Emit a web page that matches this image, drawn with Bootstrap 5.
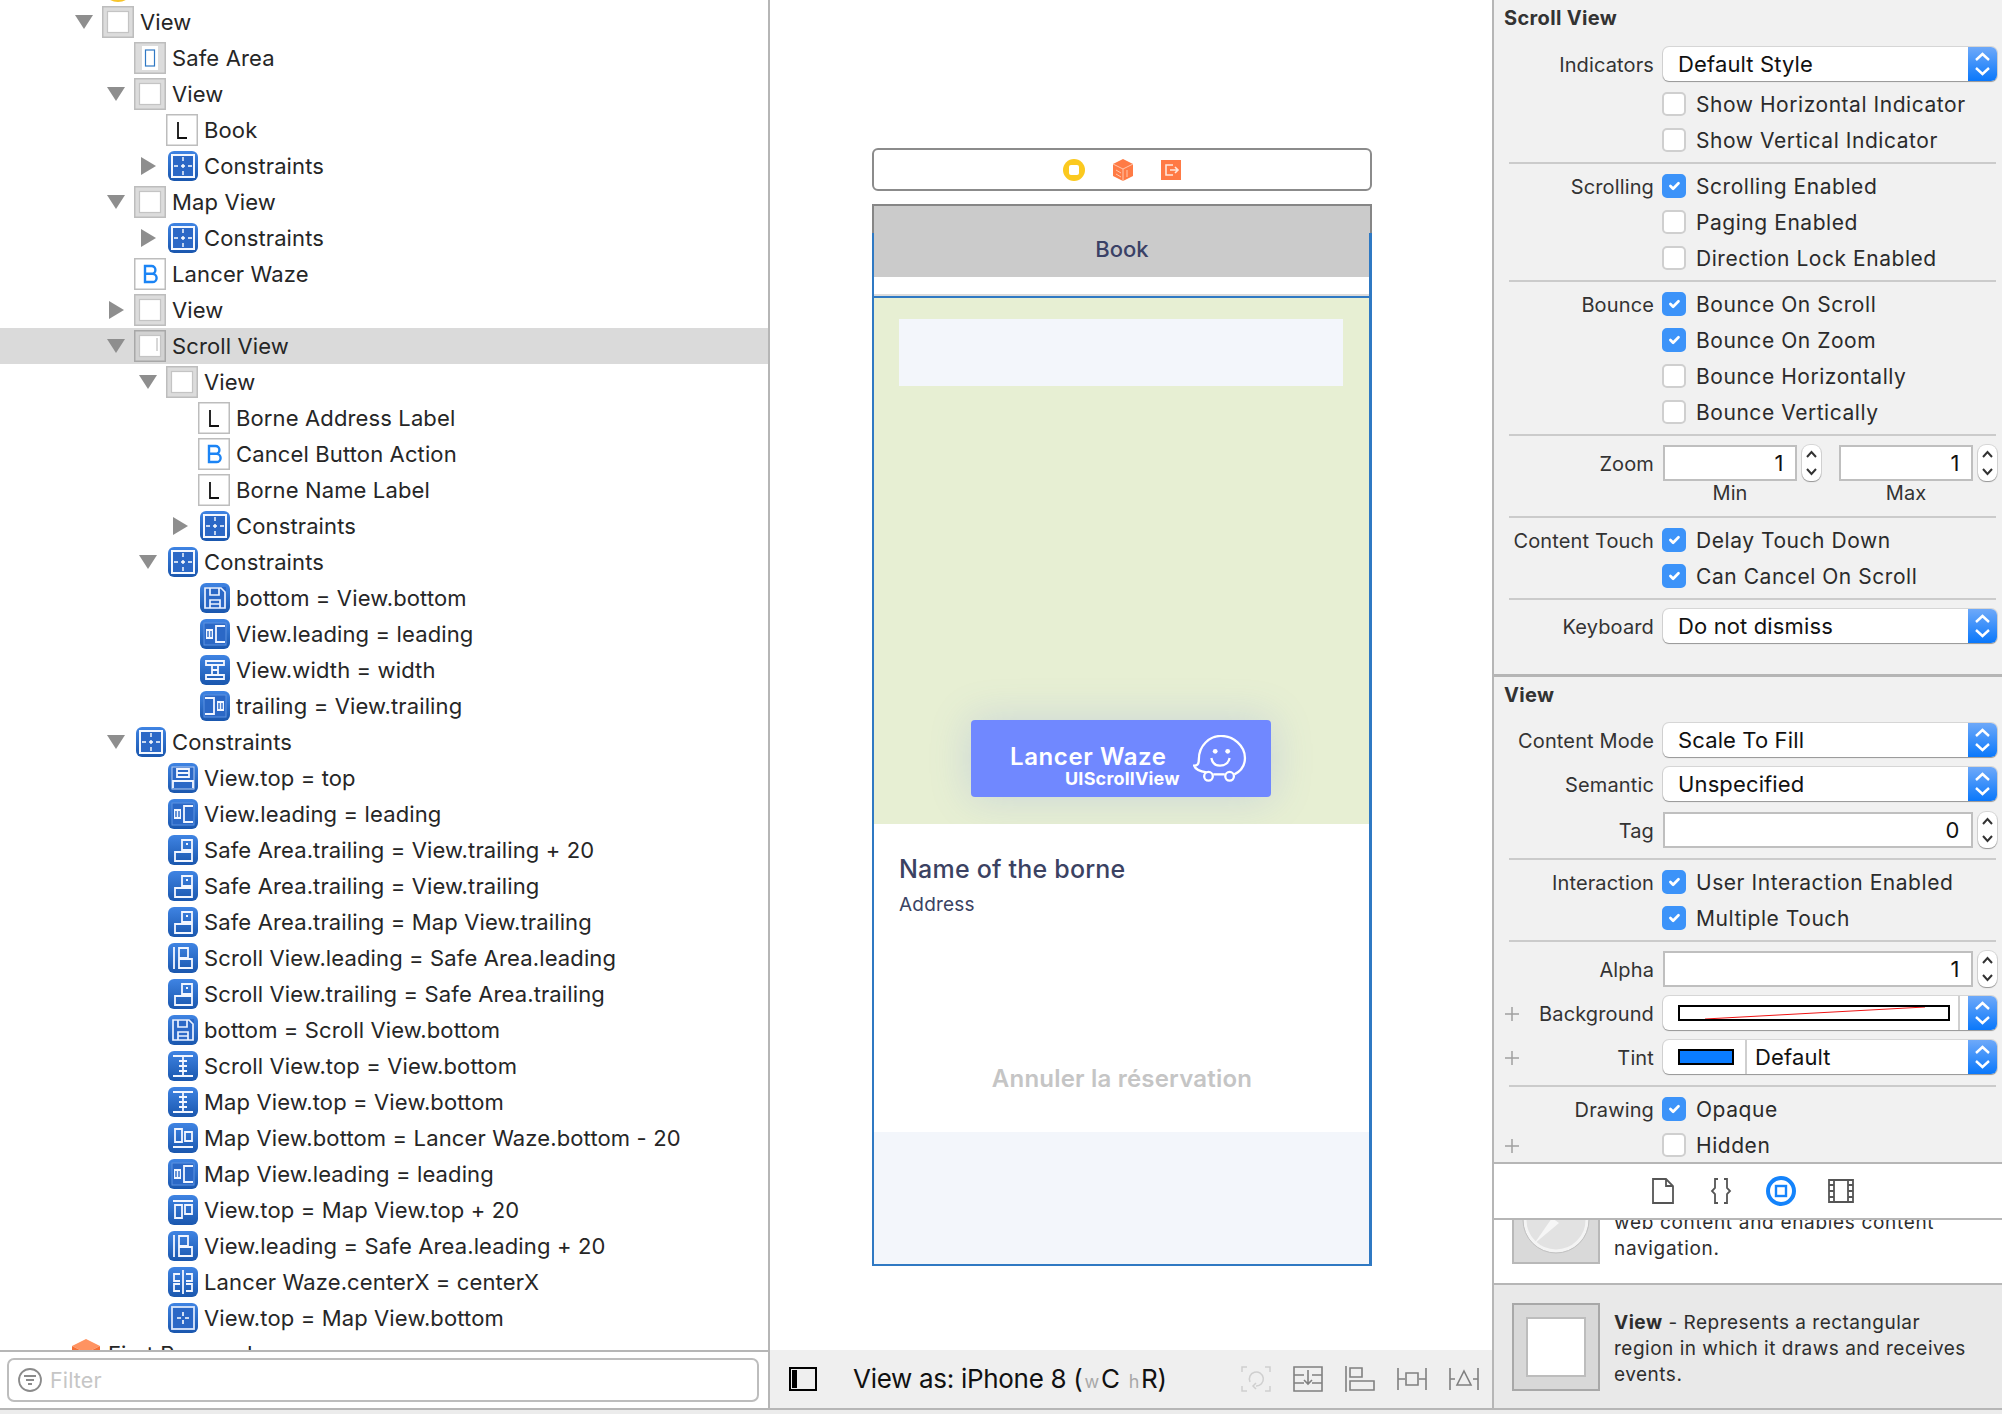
<!doctype html>
<html lang="en">
<head>
<meta charset="utf-8">
<title>Interface Builder</title>
<link rel="stylesheet" href="https://cdn.jsdelivr.net/npm/bootstrap@5.3.0/dist/css/bootstrap.min.css">
<style>
html,body{height:1414px;overflow:hidden}
body{width:2002px;background:#ececec;font-family:Inter,Roboto,"Liberation Sans",sans-serif;font-size:22px;color:#262626;letter-spacing:.13px}
svg{display:block;flex:none}
.shell{height:1408px}
/* outline */
.tree-col{width:770px;background:#fff;border-right:2px solid #b6b6b6}
.tree{height:1350px;overflow:hidden;padding-top:4px}
.trow{height:36px;line-height:36px;white-space:nowrap}
.trow.first{margin-top:-36px}
.trow.sel{background:#dadada}
.lv0{padding-left:75px}.lv1{padding-left:107px}.lv2{padding-left:139px}.lv3{padding-left:171px}
.lvc{padding-left:72px}
.tog{width:18px;margin-right:9px;height:18px}
.ico{margin-right:6px}
.cube{margin-right:8px}
.filter-bar{height:58px;border-top:2px solid #b6b6b6;padding:6px 9px 0 7px;background:#fff}
.filter-field{height:44px;border:2px solid #bdbdbd;border-radius:7px;padding-left:9px;gap:8px;color:#c6c6c6;font-size:21.500px}
/* canvas */
.canvas-col{width:724px;background:#fff;border-right:2px solid #b6b6b6}
.canvas{height:1350px;padding:148px 0 0 102px;overflow:hidden}
.scene-bar{width:500px;height:43px;border:2px solid #8b8b8b;border-radius:6px;gap:28px;padding-right:1px}
.phone{position:relative;width:500px;height:1062px;margin-top:13px;border:2px solid #868686;border-bottom-color:#2f79c3;background:#f3f6fb}
.phone-frame{position:absolute;left:-2px;right:-2px;top:27px;bottom:-2px;border:solid #2f79c3;border-width:0 3px 2px 2px;pointer-events:none}
.nav-area{height:71px;background:#cbcbcb;color:#3a4166;font-weight:500;font-size:22px;letter-spacing:0;padding-top:28px;line-height:30px}
.nav-gap{height:21px;background:#fff;border-bottom:2px solid #2f79c3;box-shadow:inset 0 -2px 0 #dcdcdc}
.map-area{height:526px;background:#e7efd3;padding:21px 27px 0 25px}
.addr-box{height:67px;background:#f3f6fb}
.waze-btn{width:300px;height:77px;margin-left:72px;margin-top:334px;background:#7088ff;border-radius:4px;box-shadow:0 0 42px rgba(90,120,230,.22);color:#fff;padding:0 24px 0 39px}
.waze-main{font-weight:600;font-size:24px;line-height:28px;letter-spacing:.6px;margin-top:23px;white-space:nowrap}
.waze-sub{font-weight:700;font-size:18px;line-height:18px;letter-spacing:.2px;margin-left:55px;margin-top:-1px;white-space:nowrap}
.info-area{height:308px;background:#fff;padding:0 25px;color:#3b4262;letter-spacing:.2px}
.borne-name{font-weight:500;font-size:25px;line-height:30px;padding-top:30px;height:60px}
.borne-addr{font-size:19px;line-height:24px;margin-top:9px;font-weight:400}
.cancel-txt{color:#c5c5c5;font-weight:600;font-size:24px;line-height:30px;text-align:center;margin-top:147px;letter-spacing:.2px}
.canvas-foot{height:58px;background:#efefef;padding-left:19px}
.viewas{margin-left:36px;font-size:26px;color:#111;letter-spacing:-.3px;width:388px;white-space:nowrap;margin-top:-1px}
.viewas small{font-size:18px;color:#a8a8a8;margin:0 2px}
.foot-ico{gap:22px}
/* inspector */
.insp-col{width:506px;background:#f1f1f1}
.insp{height:1162px;overflow:hidden;font-size:21px;color:#2b2b2b;letter-spacing:.55px}
.insp-h{height:36px;line-height:36px;padding-left:10px;font-weight:700;font-size:20px;color:#333;letter-spacing:.35px}
.r{height:36px;line-height:36px;white-space:nowrap}
.r>span{padding-top:2px}
.lab{width:160px;flex:none;text-align:right;font-size:20px;color:#333;margin-right:8px;letter-spacing:.13px;padding-top:2px}
.lab.plus{padding-left:11px;align-items:center}
.form-check-input.cb{width:24px;height:24px;margin:0 10px 0 0;border:2px solid #cfcfcf;border-radius:5px;flex:none;opacity:1!important;background-color:#fff}
.form-check-input.cb:checked{background-color:#3c93f9;border-color:#3c93f9;background-size:88%}
.sep{height:2px;margin:4px 6px 4px 15px;background:#cbcbcb}
.mt4{margin-top:4px}.mt8{margin-top:8px}.mt10{margin-top:10px}.mt9{margin-top:9px}.mt11{margin-top:11px}
.sel-pop{width:334px;height:34px;background:#fff;border-radius:6px;box-shadow:0 1px 1px rgba(0,0,0,.3),0 0 0 1px #d6d6d6;font-size:22px;color:#111;line-height:34px;overflow:hidden;margin-left:1px;letter-spacing:.13px}
.pop-txt{padding-left:15px;flex:1}
.pop-arrow{width:29px;height:34px;background:linear-gradient(#6ea9f9,#0a78fb);flex:none;justify-content:center}
.num{height:36px;border:2px solid #bfbfbf;background:#fff;text-align:right;line-height:32px;padding-right:11px;font-size:22px;color:#111;margin-left:1px}
.num.w134{width:134px}
.num.w310{width:310px}
.step{width:19px;height:36px;border-radius:8px;background:#fff;box-shadow:0 1px 1px rgba(0,0,0,.3),0 0 0 1px #d6d6d6;margin-left:5px;flex:none}
.mm{font-size:20px;color:#333;height:24px;line-height:24px;text-align:center;width:134px;letter-spacing:.1px}
.zoomgap{margin-right:17px}
.zoomcap{padding-left:169px;height:24px}
.capgap{margin-right:42px}
.sw-bg{width:272px;height:16px;border:2px solid #000;margin-left:15px;flex:none}
.v-div{width:2px;height:34px;background:#cfcfcf;flex:none}
.sw-tint{width:56px;height:16px;border:2px solid #000;background:#0a7cff;margin:0 11px 0 15px;flex:none}
.sect-line{height:3px;background:#b5b5b5;margin-top:30px}
.tabs{height:58px;background:#fff;border-top:2px solid #b6b6b6;border-bottom:2px solid #b6b6b6;gap:34px;padding-left:158px}
.tab-a{margin-right:2px}.tab-c{margin-right:-2px}
.lib{height:186px;background:#fff;font-size:19px;color:#2e2e2e;line-height:26px;letter-spacing:.5px}
.lib-a{height:63px;overflow:hidden;padding-left:18px;gap:14px;letter-spacing:.68px}
.lib-thumb{width:88px;height:88px;margin-top:-44px;flex:none}
.lib-text{margin-top:-10px;width:374px;white-space:nowrap}
.lib-b{height:125px;background:#e9e9e9;border-top:2px solid #b6b6b6;padding:18px 0 0 18px;gap:14px}
.view-thumb{width:88px;height:88px;background:#d8d8d8;border:2px solid #a8a8a8;padding:12px;flex:none}
.view-thumb span{display:block;width:100%;height:100%;background:#fff;border:2px solid #bdbdbd}
.lib-b .lib-copy{margin-top:7px;width:366px}
.botline{height:2px;background:#b6b6b6}
</style>
</head>
<body>
<svg width="0" height="0" style="position:absolute" aria-hidden="true">
<defs>
<linearGradient id="bg" x1="0" y1="0" x2="0" y2="1"><stop offset="0" stop-color="#3f84e3"/><stop offset="1" stop-color="#1a57ae"/></linearGradient>
<symbol id="dn" viewBox="0 0 18 18"><path d="M0 2h18L9 16z" fill="#8e8e8e"/></symbol>
<symbol id="rt" viewBox="0 0 18 18"><path d="M2 0l15 9-15 9z" fill="#8e8e8e"/></symbol>
<symbol id="vw" viewBox="0 0 32 32"><rect x=".75" y=".75" width="30.5" height="30.5" fill="#dcdcdc" stroke="#bdbdbd" stroke-width="1.5"/><rect x="5.5" y="5.5" width="21" height="21" fill="#fff" stroke="#c4c4c4" stroke-width="1.2"/></symbol>
<symbol id="vs" viewBox="0 0 32 32"><rect x=".75" y=".75" width="30.5" height="30.5" fill="#d2d2d2" stroke="#a8a8a8" stroke-width="1.5"/><rect x="5.5" y="5.5" width="21" height="21" fill="#fff" stroke="#c4c4c4" stroke-width="1.2"/><path d="M23 8v13" stroke="#b0b0b0" stroke-width="1"/></symbol>
<symbol id="sa" viewBox="0 0 32 32"><rect x=".75" y=".75" width="30.5" height="30.5" fill="#dcdcdc" stroke="#bdbdbd" stroke-width="1.5"/><rect x="8" y="4" width="16" height="24" fill="#fff"/><rect x="11.5" y="8" width="9" height="16" fill="#fff" stroke="#2f78c4" stroke-width="1.2"/></symbol>
<symbol id="lb" viewBox="0 0 32 32"><rect x=".75" y=".75" width="30.5" height="30.5" fill="#fff" stroke="#bdbdbd" stroke-width="1.5"/><path d="M12 8v16h9" fill="none" stroke="#111" stroke-width="1.8"/></symbol>
<symbol id="bt" viewBox="0 0 32 32"><rect x=".75" y=".75" width="30.5" height="30.5" fill="#fff" stroke="#bdbdbd" stroke-width="1.5"/><path d="M11 8h6.5a3.8 3.8 0 0 1 0 7.8H11zM11 15.8h7.5a4 4 0 0 1 0 8.2H11z" fill="none" stroke="#1b84f5" stroke-width="2.400"/></symbol>
<symbol id="cb0" viewBox="0 0 30 30"><rect width="30" height="30" rx="6" fill="url(#bg)"/></symbol>
<symbol id="grid" viewBox="0 0 30 30"><use href="#cb0"/><rect x="4" y="4" width="22" height="22" fill="#2b68c6" stroke="#f4f8ff" stroke-width="2"/><path d="M15 6v4M15 13v4M15 20v4M6 15h4M13 15h4M20 15h4" stroke="#fff" stroke-width="1.4"/></symbol>
<symbol id="frame" viewBox="0 0 30 30"><use href="#cb0"/><rect x="4" y="4" width="22" height="22" fill="#2b68c6" stroke="#dbe7fb" stroke-width="1.8"/><path d="M15 9v4M15 17v4M9 15h4M17 15h4" stroke="#fff" stroke-width="1.6"/></symbol>
<symbol id="flop" viewBox="0 0 30 30"><use href="#cb0"/><rect x="4" y="4" width="22" height="22" fill="#2b68c6"/><g fill="none" stroke="#eaf1ff" stroke-width="1.7"><path d="M5 5h16l4 4v16H5z"/><path d="M10 5v7h9V5M10 25v-8h10v8M10 21h10"/></g></symbol>
<symbol id="lead" viewBox="0 0 30 30"><use href="#cb0"/><rect x="4" y="4" width="22" height="22" fill="#2b68c6" stroke="#5d92e2" stroke-width="1"/><path d="M6 10h7v10H6z" fill="#f2f6ff"/><path d="M8 12v6M11 12v6" stroke="#2b68c6" stroke-width="1.400"/><path d="M25 7h-9v16h9" fill="none" stroke="#f2f6ff" stroke-width="1.800"/></symbol>
<symbol id="trail" viewBox="0 0 30 30"><use href="#cb0"/><rect x="4" y="4" width="22" height="22" fill="#2b68c6" stroke="#5d92e2" stroke-width="1"/><path d="M17 10h7v10h-7z" fill="#f2f6ff"/><path d="M19 12v6M22 12v6" stroke="#2b68c6" stroke-width="1.400"/><path d="M5 7h9v16H5" fill="none" stroke="#f2f6ff" stroke-width="1.800"/></symbol>
<symbol id="width" viewBox="0 0 30 30"><use href="#cb0"/><g fill="none" stroke="#f2f6ff" stroke-width="1.8"><path d="M6 6h18v4H6zM6 20h18v4H6zM12 10v10M18 10v10M12 15h6"/></g></symbol>
<symbol id="top" viewBox="0 0 30 30"><use href="#cb0"/><rect x="4" y="4" width="22" height="22" fill="#2b68c6" stroke="#b7cef3" stroke-width="1"/><g fill="none" stroke="#f2f6ff" stroke-width="1.8"><path d="M9 6h12v8H9zM5 25v-7h20v7M9 10h12"/></g></symbol>
<symbol id="tr2" viewBox="0 0 30 30"><use href="#cb0"/><g fill="none" stroke="#f2f6ff" stroke-width="1.8"><path d="M14 5h10v10H14zM7 17h17v9H7zM18 9h2"/></g></symbol>
<symbol id="ld2" viewBox="0 0 30 30"><use href="#cb0"/><g fill="none" stroke="#f2f6ff" stroke-width="1.8"><path d="M6 4v22M11 5h9v10h-9zM11 16h13v9H11z"/></g></symbol>
<symbol id="mid" viewBox="0 0 30 30"><use href="#cb0"/><g fill="none" stroke="#f2f6ff" stroke-width="1.8"><path d="M5 5h20M5 25h20M11 10h8M11 15h8M11 20h8M15 6v18"/></g></symbol>
<symbol id="bl" viewBox="0 0 30 30"><use href="#cb0"/><g fill="none" stroke="#f2f6ff" stroke-width="1.8"><path d="M5 24h20M7 6h7v13H7zM17 9h7v9h-7z"/></g></symbol>
<symbol id="tl" viewBox="0 0 30 30"><use href="#cb0"/><g fill="none" stroke="#f2f6ff" stroke-width="1.8"><path d="M5 6h20M7 10h7v13H7zM17 10h7v9h-7z"/></g></symbol>
<symbol id="cx" viewBox="0 0 30 30"><use href="#cb0"/><g fill="none" stroke="#f2f6ff" stroke-width="1.8"><path d="M15 3v24M12 7H6v7h6M18 7h6v7h-6M12 17H6v7h6M18 17h6v7h-6"/></g></symbol>
<symbol id="upd" viewBox="0 0 18 36"><path d="M4.5 12L9 7l4.5 5M4.5 24L9 29l4.5-5" fill="none" stroke="#333" stroke-width="2" /></symbol>
<symbol id="arr" viewBox="0 0 29 34"><path d="M8 13l6.5-6 6.500 6M8 21l6.500 6 6.500-6" fill="none" stroke="#fff" stroke-width="2.400"/></symbol>
<symbol id="pl" viewBox="0 0 14 14"><path d="M7 0v14M0 7h14" stroke="#a0a0a0" stroke-width="1.500"/></symbol>
</defs>
</svg>

<div class="shell d-flex">
  <!-- Outline -->
  <div class="tree-col flex-none">
    <div class="tree">
      <div class="trow first d-flex align-items-center lv0"><span class="tog"></span><svg class="ico" width="32" height="32" viewBox="0 0 32 32"><circle cx="16" cy="16" r="16" fill="#f7c52b"/></svg></div>
      <div class="trow d-flex align-items-center lv0"><svg class="tog"><use href="#dn"/></svg><svg class="ico" width="32" height="32"><use href="#vw"/></svg>View</div>
      <div class="trow d-flex align-items-center lv1"><span class="tog"></span><svg class="ico" width="32" height="32"><use href="#sa"/></svg>Safe Area</div>
      <div class="trow d-flex align-items-center lv1"><svg class="tog"><use href="#dn"/></svg><svg class="ico" width="32" height="32"><use href="#vw"/></svg>View</div>
      <div class="trow d-flex align-items-center lv2"><span class="tog"></span><svg class="ico" width="32" height="32"><use href="#lb"/></svg>Book</div>
      <div class="trow d-flex align-items-center lv2"><svg class="tog"><use href="#rt"/></svg><svg class="ico cico" width="32" height="30"><use href="#grid" x="2" width="30" height="30"/></svg>Constraints</div>
      <div class="trow d-flex align-items-center lv1"><svg class="tog"><use href="#dn"/></svg><svg class="ico" width="32" height="32"><use href="#vw"/></svg>Map View</div>
      <div class="trow d-flex align-items-center lv2"><svg class="tog"><use href="#rt"/></svg><svg class="ico" width="32" height="30"><use href="#grid" x="2" width="30" height="30"/></svg>Constraints</div>
      <div class="trow d-flex align-items-center lv1"><span class="tog"></span><svg class="ico" width="32" height="32"><use href="#bt"/></svg>Lancer Waze</div>
      <div class="trow d-flex align-items-center lv1"><svg class="tog"><use href="#rt"/></svg><svg class="ico" width="32" height="32"><use href="#vw"/></svg>View</div>
      <div class="trow sel d-flex align-items-center lv1"><svg class="tog"><use href="#dn"/></svg><svg class="ico" width="32" height="32"><use href="#vs"/></svg>Scroll View</div>
      <div class="trow d-flex align-items-center lv2"><svg class="tog"><use href="#dn"/></svg><svg class="ico" width="32" height="32"><use href="#vw"/></svg>View</div>
      <div class="trow d-flex align-items-center lv3"><span class="tog"></span><svg class="ico" width="32" height="32"><use href="#lb"/></svg>Borne Address Label</div>
      <div class="trow d-flex align-items-center lv3"><span class="tog"></span><svg class="ico" width="32" height="32"><use href="#bt"/></svg>Cancel Button Action</div>
      <div class="trow d-flex align-items-center lv3"><span class="tog"></span><svg class="ico" width="32" height="32"><use href="#lb"/></svg>Borne Name Label</div>
      <div class="trow d-flex align-items-center lv3"><svg class="tog"><use href="#rt"/></svg><svg class="ico" width="32" height="30"><use href="#grid" x="2" width="30" height="30"/></svg>Constraints</div>
      <div class="trow d-flex align-items-center lv2"><svg class="tog"><use href="#dn"/></svg><svg class="ico" width="32" height="30"><use href="#grid" x="2" width="30" height="30"/></svg>Constraints</div>
      <div class="trow d-flex align-items-center lv3"><span class="tog"></span><svg class="ico" width="32" height="30"><use href="#flop" x="2" width="30" height="30"/></svg>bottom = View.bottom</div>
      <div class="trow d-flex align-items-center lv3"><span class="tog"></span><svg class="ico" width="32" height="30"><use href="#lead" x="2" width="30" height="30"/></svg>View.leading = leading</div>
      <div class="trow d-flex align-items-center lv3"><span class="tog"></span><svg class="ico" width="32" height="30"><use href="#width" x="2" width="30" height="30"/></svg>View.width = width</div>
      <div class="trow d-flex align-items-center lv3"><span class="tog"></span><svg class="ico" width="32" height="30"><use href="#trail" x="2" width="30" height="30"/></svg>trailing = View.trailing</div>
      <div class="trow d-flex align-items-center lv1"><svg class="tog"><use href="#dn"/></svg><svg class="ico" width="32" height="30"><use href="#grid" x="2" width="30" height="30"/></svg>Constraints</div>
      <div class="trow d-flex align-items-center lv2"><span class="tog"></span><svg class="ico" width="32" height="30"><use href="#top" x="2" width="30" height="30"/></svg>View.top = top</div>
      <div class="trow d-flex align-items-center lv2"><span class="tog"></span><svg class="ico" width="32" height="30"><use href="#lead" x="2" width="30" height="30"/></svg>View.leading = leading</div>
      <div class="trow d-flex align-items-center lv2"><span class="tog"></span><svg class="ico" width="32" height="30"><use href="#tr2" x="2" width="30" height="30"/></svg>Safe Area.trailing = View.trailing + 20</div>
      <div class="trow d-flex align-items-center lv2"><span class="tog"></span><svg class="ico" width="32" height="30"><use href="#tr2" x="2" width="30" height="30"/></svg>Safe Area.trailing = View.trailing</div>
      <div class="trow d-flex align-items-center lv2"><span class="tog"></span><svg class="ico" width="32" height="30"><use href="#tr2" x="2" width="30" height="30"/></svg>Safe Area.trailing = Map View.trailing</div>
      <div class="trow d-flex align-items-center lv2"><span class="tog"></span><svg class="ico" width="32" height="30"><use href="#ld2" x="2" width="30" height="30"/></svg>Scroll View.leading = Safe Area.leading</div>
      <div class="trow d-flex align-items-center lv2"><span class="tog"></span><svg class="ico" width="32" height="30"><use href="#tr2" x="2" width="30" height="30"/></svg>Scroll View.trailing = Safe Area.trailing</div>
      <div class="trow d-flex align-items-center lv2"><span class="tog"></span><svg class="ico" width="32" height="30"><use href="#flop" x="2" width="30" height="30"/></svg>bottom = Scroll View.bottom</div>
      <div class="trow d-flex align-items-center lv2"><span class="tog"></span><svg class="ico" width="32" height="30"><use href="#mid" x="2" width="30" height="30"/></svg>Scroll View.top = View.bottom</div>
      <div class="trow d-flex align-items-center lv2"><span class="tog"></span><svg class="ico" width="32" height="30"><use href="#mid" x="2" width="30" height="30"/></svg>Map View.top = View.bottom</div>
      <div class="trow d-flex align-items-center lv2"><span class="tog"></span><svg class="ico" width="32" height="30"><use href="#bl" x="2" width="30" height="30"/></svg>Map View.bottom = Lancer Waze.bottom - 20</div>
      <div class="trow d-flex align-items-center lv2"><span class="tog"></span><svg class="ico" width="32" height="30"><use href="#lead" x="2" width="30" height="30"/></svg>Map View.leading = leading</div>
      <div class="trow d-flex align-items-center lv2"><span class="tog"></span><svg class="ico" width="32" height="30"><use href="#tl" x="2" width="30" height="30"/></svg>View.top = Map View.top + 20</div>
      <div class="trow d-flex align-items-center lv2"><span class="tog"></span><svg class="ico" width="32" height="30"><use href="#ld2" x="2" width="30" height="30"/></svg>View.leading = Safe Area.leading + 20</div>
      <div class="trow d-flex align-items-center lv2"><span class="tog"></span><svg class="ico" width="32" height="30"><use href="#cx" x="2" width="30" height="30"/></svg>Lancer Waze.centerX = centerX</div>
      <div class="trow d-flex align-items-center lv2"><span class="tog"></span><svg class="ico" width="32" height="30"><use href="#frame" x="2" width="30" height="30"/></svg>View.top = Map View.bottom</div>
      <div class="trow d-flex align-items-center lvc"><svg class="cube" width="28" height="30" viewBox="0 0 28 30"><path d="M0 7L14 0l14 7-14 7z" fill="#ff9361"/><path d="M0 7l14 7v16L0 23zM28 7v16l-14 7V14z" fill="#f56f35"/></svg>First Responder</div>
    </div>
    <div class="filter-bar">
      <div class="filter-field d-flex align-items-center">
        <svg width="24" height="26" viewBox="0 0 24 26"><circle cx="12" cy="13" r="11" fill="none" stroke="#8b8b8b" stroke-width="1.800"/><path d="M6 9h12M8 13h8M10 17h4" stroke="#8b8b8b" stroke-width="1.800"/></svg>
        <span>Filter</span>
      </div>
    </div>
  </div>

  <!-- Canvas -->
  <div class="canvas-col flex-none">
    <div class="canvas">
      <div class="scene-bar d-flex align-items-center justify-content-center">
        <svg width="22" height="22" viewBox="0 0 22 22"><circle cx="11" cy="11" r="11" fill="#fbc91f"/><rect x="6" y="6" width="10" height="10" rx="2" fill="#fff"/></svg>
        <svg width="20" height="22" viewBox="0 0 20 22"><path d="M0 5l10-5 10 5v12l-10 5-10-5z" fill="#ff7b45"/><path d="M0 5l10 5 10-5M10 10v12M3 11l5 3M3 15l5 3M14 11v7" stroke="#ffc7ac" stroke-width="1" fill="none"/></svg>
        <svg width="20" height="20" viewBox="0 0 20 20"><rect width="20" height="20" fill="#ff7a45"/><path d="M12 5H5v10h7M9 10h8M14 7l3 3-3 3" fill="none" stroke="#ffe6da" stroke-width="1.600"/></svg>
      </div>
      <div class="phone">
        <div class="nav-area text-center">Book</div>
        <div class="nav-gap"></div>
        <div class="map-area">
          <div class="addr-box"></div>
          <div class="waze-btn d-flex justify-content-between">
            <div>
              <div class="waze-main">Lancer Waze</div>
              <div class="waze-sub">UIScrollView</div>
            </div>
            <svg class="align-self-center" width="54" height="48" viewBox="0 0 56 50"><g fill="none" stroke="#fff" stroke-width="2.400"><path d="M14 39C6 38 2 35 1 32c3 0 5-1 5-7 0-14 11-24 23-24 13 0 25 10 25 23 0 9-5 14-11 17"/><path d="M21 41h12"/><circle cx="16" cy="43" r="4.500"/><circle cx="38" cy="43" r="4.500"/><path d="M19 24c1 5 4 8 9 8s9-3 10-8"/></g><circle cx="23" cy="17" r="2.500" fill="#fff"/><circle cx="36" cy="17" r="2.500" fill="#fff"/></svg>
          </div>
        </div>
        <div class="info-area">
          <div class="borne-name">Name of the borne</div>
          <div class="borne-addr">Address</div>
          <div class="cancel-txt">Annuler la réservation</div>
        </div>
        <div class="phone-frame"></div>
      </div>
    </div>
    <div class="canvas-foot d-flex align-items-center">
      <svg width="28" height="24" viewBox="0 0 28 24"><rect x="1" y="1" width="26" height="22" fill="none" stroke="#000" stroke-width="2"/><rect x="3" y="3" width="5" height="18" fill="#000"/></svg>
      <div class="viewas">View as: iPhone 8 (<small>w</small>C <small>h</small>R)</div>
      <div class="foot-ico d-flex">
        <svg width="30" height="26" viewBox="0 0 30 26"><g fill="none" stroke="#cfcfcf" stroke-width="1.500"><path d="M1 6V1h5M24 1h5v5M29 20v5h-5M6 25H1v-5"/><path d="M9 16a7 7 0 1 1 6 4M15 17l-3 3 3 3"/></g></svg>
        <svg width="30" height="26" viewBox="0 0 30 26"><g fill="none" stroke="#808080" stroke-width="1.600"><path d="M1 1h28v24H1zM1 9h10M19 9h10M1 17h10M19 17h10M15 4v14M11 14l4 4 4-4"/></g></svg>
        <svg width="30" height="26" viewBox="0 0 30 26"><g fill="none" stroke="#808080" stroke-width="1.600"><path d="M1 0v26M5 2h12v9H5zM5 15h24v9H5z"/></g></svg>
        <svg width="30" height="26" viewBox="0 0 30 26"><g fill="none" stroke="#808080" stroke-width="1.600"><path d="M1 2v22M29 2v22M1 13h7M22 13h7M9 7h12v12H9z"/></g></svg>
        <svg width="30" height="26" viewBox="0 0 30 26"><g fill="none" stroke="#808080" stroke-width="1.600"><path d="M1 2v22M29 2v22M1 13h5M24 13h5M15 5l7 14H8z"/></g></svg>
      </div>
    </div>
  </div>

  <!-- Inspector -->
  <div class="insp-col flex-grow-1">
    <div class="insp">
      <div class="insp-h">Scroll View</div>
      <div class="r d-flex align-items-center mt10"><div class="lab">Indicators</div><div class="sel-pop d-flex"><div class="pop-txt">Default Style</div><div class="pop-arrow d-flex"><svg width="29" height="34"><use href="#arr"/></svg></div></div></div>
      <div class="r d-flex align-items-center mt4"><div class="lab"></div><input class="form-check-input cb" type="checkbox" disabled><span>Show Horizontal Indicator</span></div>
      <div class="r d-flex align-items-center"><div class="lab"></div><input class="form-check-input cb" type="checkbox" disabled><span>Show Vertical Indicator</span></div>
      <div class="sep"></div>
      <div class="r d-flex align-items-center"><div class="lab">Scrolling</div><input class="form-check-input cb" type="checkbox" checked disabled><span>Scrolling Enabled</span></div>
      <div class="r d-flex align-items-center"><div class="lab"></div><input class="form-check-input cb" type="checkbox" disabled><span>Paging Enabled</span></div>
      <div class="r d-flex align-items-center"><div class="lab"></div><input class="form-check-input cb" type="checkbox" disabled><span>Direction Lock Enabled</span></div>
      <div class="sep"></div>
      <div class="r d-flex align-items-center"><div class="lab">Bounce</div><input class="form-check-input cb" type="checkbox" checked disabled><span>Bounce On Scroll</span></div>
      <div class="r d-flex align-items-center"><div class="lab"></div><input class="form-check-input cb" type="checkbox" checked disabled><span>Bounce On Zoom</span></div>
      <div class="r d-flex align-items-center"><div class="lab"></div><input class="form-check-input cb" type="checkbox" disabled><span>Bounce Horizontally</span></div>
      <div class="r d-flex align-items-center"><div class="lab"></div><input class="form-check-input cb" type="checkbox" disabled><span>Bounce Vertically</span></div>
      <div class="sep"></div>
      <div class="r d-flex align-items-center mt9"><div class="lab">Zoom</div><div class="num w134">1</div><div class="step zoomgap"><svg width="19" height="36" viewBox="0 0 18 36"><use href="#upd"/></svg></div><div class="num w134">1</div><div class="step"><svg width="19" height="36" viewBox="0 0 18 36"><use href="#upd"/></svg></div></div>
      <div class="zoomcap d-flex"><div class="mm capgap">Min</div><div class="mm">Max</div></div>
      <div class="sep mt11"></div>
      <div class="r d-flex align-items-center"><div class="lab">Content Touch</div><input class="form-check-input cb" type="checkbox" checked disabled><span>Delay Touch Down</span></div>
      <div class="r d-flex align-items-center"><div class="lab"></div><input class="form-check-input cb" type="checkbox" checked disabled><span>Can Cancel On Scroll</span></div>
      <div class="sep"></div>
      <div class="r d-flex align-items-center mt8"><div class="lab">Keyboard</div><div class="sel-pop d-flex"><div class="pop-txt">Do not dismiss</div><div class="pop-arrow d-flex"><svg width="29" height="34"><use href="#arr"/></svg></div></div></div>
      <div class="sect-line"></div>
      <div class="insp-h">View</div>
      <div class="r d-flex align-items-center mt9"><div class="lab">Content Mode</div><div class="sel-pop d-flex"><div class="pop-txt">Scale To Fill</div><div class="pop-arrow d-flex"><svg width="29" height="34"><use href="#arr"/></svg></div></div></div>
      <div class="r d-flex align-items-center mt8"><div class="lab">Semantic</div><div class="sel-pop d-flex"><div class="pop-txt">Unspecified</div><div class="pop-arrow d-flex"><svg width="29" height="34"><use href="#arr"/></svg></div></div></div>
      <div class="r d-flex align-items-center mt10"><div class="lab">Tag</div><div class="num w310">0</div><div class="step"><svg width="19" height="36" viewBox="0 0 18 36"><use href="#upd"/></svg></div></div>
      <div class="sep mt10"></div>
      <div class="r d-flex align-items-center"><div class="lab">Interaction</div><input class="form-check-input cb" type="checkbox" checked disabled><span>User Interaction Enabled</span></div>
      <div class="r d-flex align-items-center"><div class="lab"></div><input class="form-check-input cb" type="checkbox" checked disabled><span>Multiple Touch</span></div>
      <div class="sep"></div>
      <div class="r d-flex align-items-center mt9"><div class="lab">Alpha</div><div class="num w310">1</div><div class="step"><svg width="19" height="36" viewBox="0 0 18 36"><use href="#upd"/></svg></div></div>
      <div class="r d-flex align-items-center mt8"><div class="lab plus d-flex justify-content-between"><svg width="14" height="14"><use href="#pl"/></svg><span>Background</span></div><div class="sel-pop d-flex align-items-center"><div class="sw-bg"><svg width="268" height="12" viewBox="0 0 268 12"><path d="M25 12L245 0" stroke="#f01515" stroke-width="1"/></svg></div><div class="ms-auto v-div me-2"></div><div class="pop-arrow d-flex"><svg width="29" height="34"><use href="#arr"/></svg></div></div></div>
      <div class="r d-flex align-items-center mt8"><div class="lab plus d-flex justify-content-between"><svg width="14" height="14"><use href="#pl"/></svg><span>Tint</span></div><div class="sel-pop d-flex align-items-center"><div class="sw-tint"></div><div class="v-div"></div><div class="pop-txt ps-2">Default</div><div class="pop-arrow d-flex"><svg width="29" height="34"><use href="#arr"/></svg></div></div></div>
      <div class="sep mt10"></div>
      <div class="r d-flex align-items-center"><div class="lab">Drawing</div><input class="form-check-input cb" type="checkbox" checked disabled><span>Opaque</span></div>
      <div class="r d-flex align-items-center"><div class="lab plus d-flex"><svg width="14" height="14"><use href="#pl"/></svg></div><input class="form-check-input cb" type="checkbox" disabled><span>Hidden</span></div>
    </div>
    <div class="tabs d-flex align-items-center">
      <svg class="tab-a" width="22" height="26" viewBox="0 0 22 26"><path d="M1 1h13l7 7v17H1zM14 1v7h7" fill="none" stroke="#555" stroke-width="1.800"/></svg>
      <svg width="22" height="26" viewBox="0 0 22 26"><path d="M8 1H5v9l-3 3 3 3v9h3M14 1h3v9l3 3-3 3v9h-3" fill="none" stroke="#555" stroke-width="1.800"/></svg>
      <svg class="tab-c" width="30" height="30" viewBox="0 0 30 30"><circle cx="15" cy="15" r="13" fill="none" stroke="#1483fb" stroke-width="4"/><rect x="10" y="10" width="10" height="10" fill="none" stroke="#1483fb" stroke-width="2.400"/></svg>
      <svg width="26" height="24" viewBox="0 0 26 24"><path d="M1 1h24v22H1zM6 1v22M20 1v22M1 6h5M1 12h5M1 18h5M20 6h5M20 12h5M20 18h5" fill="none" stroke="#555" stroke-width="1.800"/></svg>
    </div>
    <div class="lib">
      <div class="lib-a d-flex">
        <div class="lib-thumb"><svg width="88" height="88" viewBox="0 0 88 88"><rect x="1" y="1" width="86" height="86" fill="#d9d9d9" stroke="#b8b8b8" stroke-width="2"/><circle cx="44" cy="44" r="31" fill="#e2e2e2" stroke="#f4f4f4" stroke-width="3"/><circle cx="44" cy="44" r="33" fill="none" stroke="#c2c2c2" stroke-width="1"/><path d="M22 68l18-26 7 5z" fill="#f6f6f6"/></svg></div>
        <div class="lib-text">web content and enables content<br>navigation.</div>
      </div>
      <div class="lib-b d-flex">
        <div class="view-thumb"><span></span></div>
        <div class="lib-copy"><strong>View</strong> - Represents a rectangular region in which it draws and receives events.</div>
      </div>
    </div>
  </div>
</div>
<div class="botline"></div>
<script src="https://cdn.jsdelivr.net/npm/bootstrap@5.3.0/dist/js/bootstrap.bundle.min.js"></script>
</body>
</html>
